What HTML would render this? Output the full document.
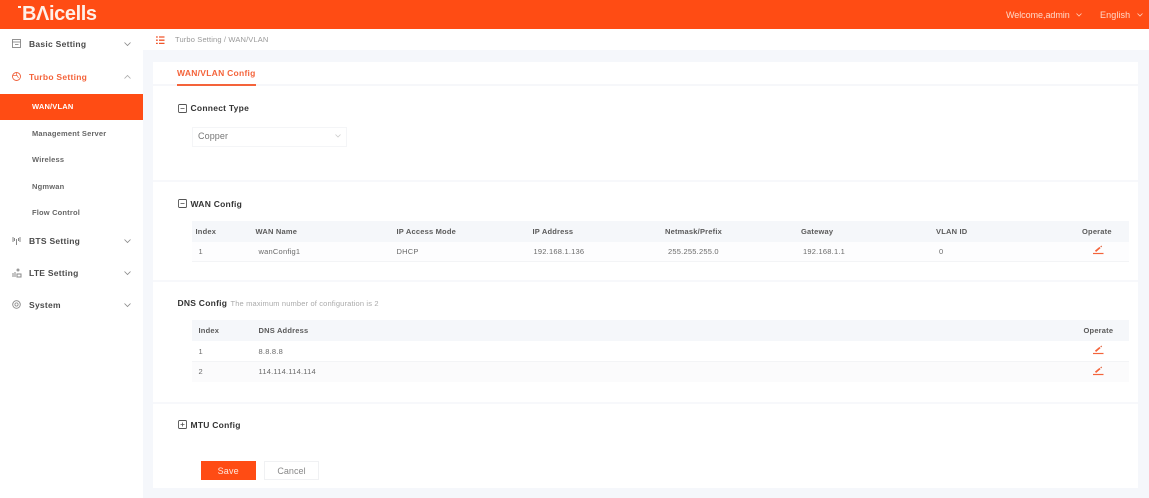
<!DOCTYPE html>
<html><head><meta charset="utf-8">
<style>
html,body{margin:0;padding:0;width:1149px;height:497px;overflow:hidden;background:#f5f7fb;font-family:"Liberation Sans",sans-serif;}
.t{position:absolute;white-space:nowrap;line-height:12px;}
.b{position:absolute;}
.menu{font-size:8.5px;font-weight:bold;color:#4a4a4a;letter-spacing:.27px;}
.sub{font-size:7.5px;font-weight:bold;color:#666;letter-spacing:.18px;}
.h{font-size:8.5px;font-weight:bold;color:#333;letter-spacing:.25px;}
.th{font-size:7.5px;font-weight:bold;color:#5a5a5a;letter-spacing:.2px;}
.td{font-size:7.5px;color:#6a6a6a;letter-spacing:.22px;}
svg{position:absolute;overflow:visible;}
</style></head><body>
<!-- header -->
<div class="b" style="left:0;top:0;width:1149px;height:28.5px;background:#ff4c14;"></div>
<div class="b" style="left:18px;top:5.500px;width:3px;height:2px;background:#fff0e8;"></div>
<div class="t" style="left:22px;top:4px;font-size:20px;line-height:20px;font-weight:bold;color:#fff0e8;letter-spacing:-.4px;">BΛicells</div>
<div class="t" style="left:1006px;top:9px;font-size:9px;color:#ffd9c9;letter-spacing:-.05px;">Welcome,admin</div>
<div class="t" style="left:1100px;top:9px;font-size:9px;color:#ffd9c9;letter-spacing:.1px;">English</div>
<svg style="left:1076px;top:13px" width="6" height="4"><path d="M.5 .5L3 3L5.500 .5" fill="none" stroke="#ffd0bd" stroke-width=".8"/></svg>
<svg style="left:1137px;top:13px" width="6" height="4"><path d="M.5 .5L3 3L5.500 .5" fill="none" stroke="#ffd0bd" stroke-width=".8"/></svg>

<!-- sidebar -->
<div class="b" style="left:0;top:28.500px;width:143px;height:469px;background:#fff;"></div>
<div class="b" style="left:0;top:94px;width:143px;height:26px;background:#ff4c14;"></div>
<svg style="left:12px;top:39px" width="10" height="10"><rect x=".5" y=".5" width="8" height="8" fill="none" stroke="#777" stroke-width=".8"/><path d="M.5 3H8.500M3 5.500H6.500" stroke="#777" stroke-width=".7"/></svg>
<div class="t menu" style="left:29px;top:38px;">Basic Setting</div>
<svg style="left:124px;top:42px" width="7" height="5"><path d="M.5 .5L3.500 3.500L6.500 .5" fill="none" stroke="#888" stroke-width=".8"/></svg>
<svg style="left:12px;top:72px" width="10" height="10"><circle cx="4.500" cy="4.500" r="4" fill="none" stroke="#f0603a" stroke-width=".9"/><path d="M1 3.500H5L6.500 6M4.500 .5V3.500" fill="none" stroke="#f0603a" stroke-width=".7"/></svg>
<div class="t menu" style="left:29px;top:70.500px;color:#f4633a;">Turbo Setting</div>
<svg style="left:124px;top:75px" width="7" height="5"><path d="M.5 3.500L3.500 .5L6.500 3.500" fill="none" stroke="#aaa" stroke-width=".8"/></svg>
<div class="t sub" style="left:32px;top:101px;color:#fff;">WAN/VLAN</div>
<div class="t sub" style="left:32px;top:127.500px;">Management Server</div>
<div class="t sub" style="left:32px;top:154px;">Wireless</div>
<div class="t sub" style="left:32px;top:180.500px;">Ngmwan</div>
<div class="t sub" style="left:32px;top:207px;">Flow Control</div>
<svg style="left:12px;top:236px" width="10" height="10"><path d="M4.500 3V9M1 1V6M8 1V6M2.500 2V5M6.500 2V5" stroke="#888" stroke-width="1" fill="none"/></svg>
<div class="t menu" style="left:29px;top:235px;">BTS Setting</div>
<svg style="left:124px;top:239px" width="7" height="5"><path d="M.5 .5L3.500 3.500L6.500 .5" fill="none" stroke="#888" stroke-width=".8"/></svg>
<svg style="left:12px;top:268px" width="10" height="10"><circle cx="6" cy="2" r="1.500" fill="#999"/><path d="M1 5V9M3 4V9M5 6H9V9H5Z" stroke="#888" stroke-width="1" fill="none"/></svg>
<div class="t menu" style="left:29px;top:267px;">LTE Setting</div>
<svg style="left:124px;top:271px" width="7" height="5"><path d="M.5 .5L3.500 3.500L6.500 .5" fill="none" stroke="#888" stroke-width=".8"/></svg>
<svg style="left:12px;top:300px" width="10" height="10"><circle cx="4.500" cy="4.500" r="3.800" fill="none" stroke="#888" stroke-width=".9"/><circle cx="4.500" cy="4.500" r="1.600" fill="none" stroke="#888" stroke-width=".8"/></svg>
<div class="t menu" style="left:29px;top:299px;">System</div>
<svg style="left:124px;top:303px" width="7" height="5"><path d="M.5 .5L3.500 3.500L6.500 .5" fill="none" stroke="#888" stroke-width=".8"/></svg>

<!-- breadcrumb -->
<div class="b" style="left:143px;top:28.500px;width:1006px;height:21.500px;background:#fff;"></div>
<svg style="left:156px;top:35.500px" width="9" height="9"><path d="M0 1H1.800M3 1H8.500M0 4.200H1.800M3 4.200H8.500M0 7.400H1.800M3 7.400H8.500" stroke="#f0552a" stroke-width="1.300"/></svg>
<div class="t" style="left:175px;top:33.500px;font-size:7.500px;color:#999;letter-spacing:.15px;">Turbo Setting / WAN/VLAN</div>

<!-- card -->
<div class="b" style="left:153px;top:62px;width:985px;height:426px;background:#fff;"></div>
<div class="b" style="left:153px;top:84px;width:985px;height:2px;background:#f6f7fa;"></div>
<div class="t" style="left:177px;top:67px;font-size:8.500px;font-weight:bold;color:#f4633a;letter-spacing:.27px;">WAN/VLAN Config</div>
<div class="b" style="left:177px;top:84px;width:79px;height:1.500px;background:#f4633a;"></div>
<div class="b" style="left:153px;top:180px;width:985px;height:2px;background:#f7f8fb;"></div>
<div class="b" style="left:153px;top:280px;width:985px;height:2px;background:#f7f8fb;"></div>
<div class="b" style="left:153px;top:402px;width:985px;height:2px;background:#f7f8fb;"></div>

<!-- connect type -->
<svg style="left:178px;top:104px" width="9" height="9"><rect x=".5" y=".5" width="8" height="8" rx="1" fill="none" stroke="#555" stroke-width=".9"/><path d="M2.500 4.500H6.500" stroke="#555" stroke-width=".8"/></svg>
<div class="t h" style="left:190.500px;top:102px;">Connect Type</div>
<div class="b" style="left:192px;top:127px;width:153px;height:18px;border:1px solid #f4f5f7;background:#fff;"></div>
<div class="t" style="left:198px;top:130px;font-size:9px;color:#777;letter-spacing:.1px;">Copper</div>
<svg style="left:335px;top:134px" width="6" height="4"><path d="M.5 .5L3 3L5.500 .5" fill="none" stroke="#ccc" stroke-width=".8"/></svg>

<!-- wan -->
<svg style="left:178px;top:199px" width="9" height="9"><rect x=".5" y=".5" width="8" height="8" rx="1" fill="none" stroke="#555" stroke-width=".9"/><path d="M2.500 4.500H6.500" stroke="#555" stroke-width=".8"/></svg>
<div class="t h" style="left:190.500px;top:198px;">WAN Config</div>
<div class="b" style="left:192px;top:221px;width:937px;height:21px;background:#f5f7fa;"></div>
<div class="b" style="left:192px;top:242px;width:937px;height:19px;background:#fdfdfe;border-bottom:1px solid #f3f4f6;"></div>
<div class="t th" style="left:195.500px;top:225.500px;">Index</div>
<div class="t th" style="left:255.500px;top:225.500px;">WAN Name</div>
<div class="t th" style="left:396.500px;top:225.500px;">IP Access Mode</div>
<div class="t th" style="left:532.500px;top:225.500px;">IP Address</div>
<div class="t th" style="left:665px;top:225.500px;">Netmask/Prefix</div>
<div class="t th" style="left:801px;top:225.500px;">Gateway</div>
<div class="t th" style="left:936px;top:225.500px;">VLAN ID</div>
<div class="t th" style="left:1082px;top:225.500px;">Operate</div>
<div class="t td" style="left:198.500px;top:245.500px;">1</div>
<div class="t td" style="left:258.500px;top:245.500px;">wanConfig1</div>
<div class="t td" style="left:396.500px;top:245.500px;">DHCP</div>
<div class="t td" style="left:533.500px;top:245.500px;">192.168.1.136</div>
<div class="t td" style="left:668px;top:245.500px;">255.255.255.0</div>
<div class="t td" style="left:803px;top:245.500px;">192.168.1.1</div>
<div class="t td" style="left:939px;top:245.500px;">0</div>
<svg style="left:1093px;top:245px" width="11" height="9"><path d="M0 8.500H10.500" stroke="#f4633a" stroke-width="1.200"/><path d="M2.500 6.300L7 2.500" stroke="#f4633a" stroke-width="1.700"/><path d="M7.700 1.900L8.700 1" stroke="#e0603a" stroke-width="1.200"/></svg>

<!-- dns -->
<div class="t h" style="left:177.500px;top:297px;">DNS Config</div>
<div class="t" style="left:230.500px;top:297.500px;font-size:7.500px;color:#aaa;letter-spacing:.15px;">The maximum number of configuration is 2</div>
<div class="b" style="left:192px;top:320px;width:937px;height:21px;background:#f5f7fa;"></div>
<div class="b" style="left:192px;top:341px;width:937px;height:20px;background:#fff;border-bottom:1px solid #f3f4f6;"></div>
<div class="b" style="left:192px;top:362px;width:937px;height:20px;background:#fbfbfc;"></div>
<div class="t th" style="left:198.500px;top:324.500px;">Index</div>
<div class="t th" style="left:258.500px;top:324.500px;">DNS Address</div>
<div class="t th" style="left:1083.500px;top:324.500px;">Operate</div>
<div class="t td" style="left:198.500px;top:345.500px;">1</div>
<div class="t td" style="left:258.500px;top:345.500px;">8.8.8.8</div>
<div class="t td" style="left:198.500px;top:366px;">2</div>
<div class="t td" style="left:258.500px;top:366px;">114.114.114.114</div>
<svg style="left:1093px;top:345px" width="11" height="9"><path d="M0 8.500H10.500" stroke="#f4633a" stroke-width="1.200"/><path d="M2.500 6.300L7 2.500" stroke="#f4633a" stroke-width="1.700"/><path d="M7.700 1.900L8.700 1" stroke="#e0603a" stroke-width="1.200"/></svg>
<svg style="left:1093px;top:366px" width="11" height="9"><path d="M0 8.500H10.500" stroke="#f4633a" stroke-width="1.200"/><path d="M2.500 6.300L7 2.500" stroke="#f4633a" stroke-width="1.700"/><path d="M7.700 1.900L8.700 1" stroke="#e0603a" stroke-width="1.200"/></svg>

<!-- mtu -->
<svg style="left:178px;top:420px" width="9" height="9"><rect x=".5" y=".5" width="8" height="8" rx="1" fill="none" stroke="#555" stroke-width=".9"/><path d="M2.500 4.500H6.500M4.500 2.500V6.500" stroke="#555" stroke-width=".8"/></svg>
<div class="t h" style="left:190.500px;top:418.500px;">MTU Config</div>

<!-- buttons -->
<div class="b" style="left:201px;top:461px;width:54.500px;height:19px;background:#ff4c14;"></div>
<div class="t" style="left:201px;top:465px;width:54.500px;text-align:center;font-size:9px;color:#ffe6dc;letter-spacing:.2px;">Save</div>
<div class="b" style="left:264px;top:461px;width:53px;height:17px;border:1px solid #f0f1f3;background:#fff;"></div>
<div class="t" style="left:264px;top:465px;width:55px;text-align:center;font-size:9px;color:#888;letter-spacing:.05px;">Cancel</div>
</body></html>
